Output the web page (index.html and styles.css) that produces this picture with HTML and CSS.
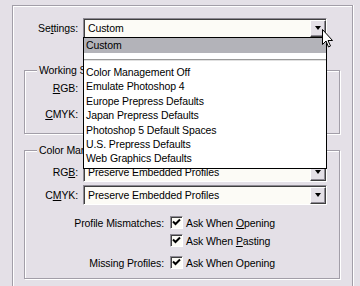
FILE: index.html
```html
<!DOCTYPE html>
<html lang="en">
	<head>
		<meta charset="UTF-8">
		<title>Color Settings</title>
		<link rel="stylesheet" href="styles.css">
	</head>
	<body>
		<div class="panel">
			<div class="row">
				<label class="lbl lbl-top">Se<u>t</u>tings:</label>
				<div class="combo"><span>Custom</span><span class="drop"></span></div>
			</div>

			<div class="group working">
				<div class="legend">Working Spaces</div>
				<div class="row row-first">
					<label class="lbl"><u>R</u>GB:</label>
					<div class="combo"><span></span><span class="drop"></span></div>
				</div>
				<div class="row row-next">
					<label class="lbl"><u>C</u>MYK:</label>
					<div class="combo"><span></span><span class="drop"></span></div>
				</div>
			</div>

			<div class="group policies">
				<div class="legend">Color Management Policies</div>
				<div class="row row-first">
					<label class="lbl">RG<u>B</u>:</label>
					<div class="combo"><span>Preserve Embedded Profiles</span><span class="drop"></span></div>
				</div>
				<div class="row row-next">
					<label class="lbl">C<u>M</u>YK:</label>
					<div class="combo"><span>Preserve Embedded Profiles</span><span class="drop"></span></div>
				</div>

				<div class="check-row cr1">
					<span class="clbl">Profile Mismatches:</span>
					<span class="box"><svg width="11" height="11" viewBox="0 0 11 11"><path d="M2 4.5 L4.5 7 L9 2.5" fill="none" stroke="#000" stroke-width="2"/></svg></span>
					<span>Ask When <u>O</u>pening</span>
				</div>
				<div class="check-row cr2">
					<span class="clbl"></span>
					<span class="box"><svg width="11" height="11" viewBox="0 0 11 11"><path d="M2 4.5 L4.5 7 L9 2.5" fill="none" stroke="#000" stroke-width="2"/></svg></span>
					<span>Ask When <u>P</u>asting</span>
				</div>
				<div class="check-row cr3">
					<span class="clbl">Missing Profiles:</span>
					<span class="box"><svg width="11" height="11" viewBox="0 0 11 11"><path d="M2 4.5 L4.5 7 L9 2.5" fill="none" stroke="#000" stroke-width="2"/></svg></span>
					<span>Ask When Opening</span>
				</div>
			</div>
		</div>

		<!-- open dropdown of the Settings combo -->
		<ul class="menu">
			<li class="on">Custom</li>
			<li class="sep"></li>
			<li>Color Management Off</li>
			<li>Emulate Photoshop 4</li>
			<li>Europe Prepress Defaults</li>
			<li>Japan Prepress Defaults</li>
			<li>Photoshop 5 Default Spaces</li>
			<li>U.S. Prepress Defaults</li>
			<li>Web Graphics Defaults</li>
		</ul>

		<svg class="pointer" width="13" height="20" viewBox="0 0 13 20">
			<path d="M0.5 0.5 V15.5 L4 12 L6.5 18 L8.5 17 L6 11.5 H10.5 Z" fill="#fff" stroke="#000" stroke-width="1"/>
		</svg>
	</body>
</html>
```

FILE: styles.css
```css
* { margin: 0; padding: 0; }

body {
	background: #e4e0e7;
	font: 10.5px "Liberation Sans", Arial, sans-serif;
	letter-spacing: -0.1px;
	color: #000;
	position: relative;
	height: 286px;
	overflow: hidden;
}

ul { list-style: none; }

/* outer etched frame, runs off the bottom */
.panel {
	box-sizing: border-box;
	margin: 5px 0 0 12px;
	width: 341px;
	height: 281px;
	padding-top: 12px;
	border: 1px solid #a29ea8;
	border-bottom: none;
	box-shadow: inset 1px 1px 0 #fff, 1px 0 0 #fff;
}

.row { display: flex; align-items: center; }

.lbl {
	width: 53px;
	margin-right: 5px;
	text-align: right;
}
.lbl-top { width: 65px; }

/* combo box, sunken */
.combo {
	box-sizing: border-box;
	width: 244px;
	height: 20px;
	display: flex;
	align-items: center;
	padding-left: 4px;
	background: #fcfbf6;
	border: 1px solid;
	border-color: #8e8a94 #fff #fff #8e8a94;
	box-shadow: inset 1px 1px 0 #404040;
	white-space: nowrap;
	overflow: hidden;
}

.drop {
	box-sizing: border-box;
	margin-left: auto;
	width: 16px;
	height: 17px;
	flex: none;
	display: flex;
	align-items: center;
	justify-content: center;
	background: #e4e0e7;
	border: 1px solid;
	border-color: #fff #404040 #404040 #fff;
	box-shadow: inset -1px -1px 0 #8e8a94;
}
.drop::after {
	content: "";
	border-top: 4px solid #000;
	border-left: 3.5px solid transparent;
	border-right: 3.5px solid transparent;
}

/* group boxes */
.group {
	box-sizing: border-box;
	width: 316px;
	margin-left: 11px;
	border: 1px solid #a29ea8;
	box-shadow: inset 1px 1px 0 #fff, 1px 1px 0 #fff;
}
.legend {
	display: table;
	margin: -7px 0 0 12px;
	padding: 0 2px;
	line-height: 13px;
	background: #e4e0e7;
}

.working { margin-top: 32px; padding-bottom: 9px; }
.working .row-first { margin-top: 1px; }
.working .row-next { margin-top: 6px; }

.policies { margin-top: 16px; padding-bottom: 9px; }
.policies .row-first { margin-top: 5px; }
.policies .row-next { margin-top: 3px; }

.check-row { display: flex; align-items: center; height: 13px; }
.cr1 { margin-top: 11px; }
.cr2 { margin-top: 5px; }
.cr3 { margin-top: 9px; }

.clbl {
	width: 139px;
	margin-right: 6px;
	text-align: right;
}

.box {
	box-sizing: border-box;
	width: 13px;
	height: 13px;
	margin-right: 3px;
	display: flex;
	align-items: center;
	justify-content: center;
	background: #fcfbf6;
	border: 1px solid;
	border-color: #8e8a94 #fff #fff #8e8a94;
	box-shadow: inset 1px 1px 0 #404040;
}

/* dropped list */
.menu {
	position: absolute;
	left: 83px;
	top: 37px;
	box-sizing: border-box;
	width: 244px;
	height: 132px;
	background: #fff;
	border: 1px solid #000;
}
.menu li {
	padding-left: 2px;
	line-height: 14.4px;
	white-space: nowrap;
}
.menu li.on {
	line-height: 15px;
	background: #b3b3b9;
}
.menu li.sep {
	height: 0;
	margin: 6px 0 4px;
	border-top: 1px solid #9a9a9a;
	border-bottom: 1px solid #e0e0e0;
}

.pointer {
	position: absolute;
	left: 322px;
	top: 29px;
}
```
